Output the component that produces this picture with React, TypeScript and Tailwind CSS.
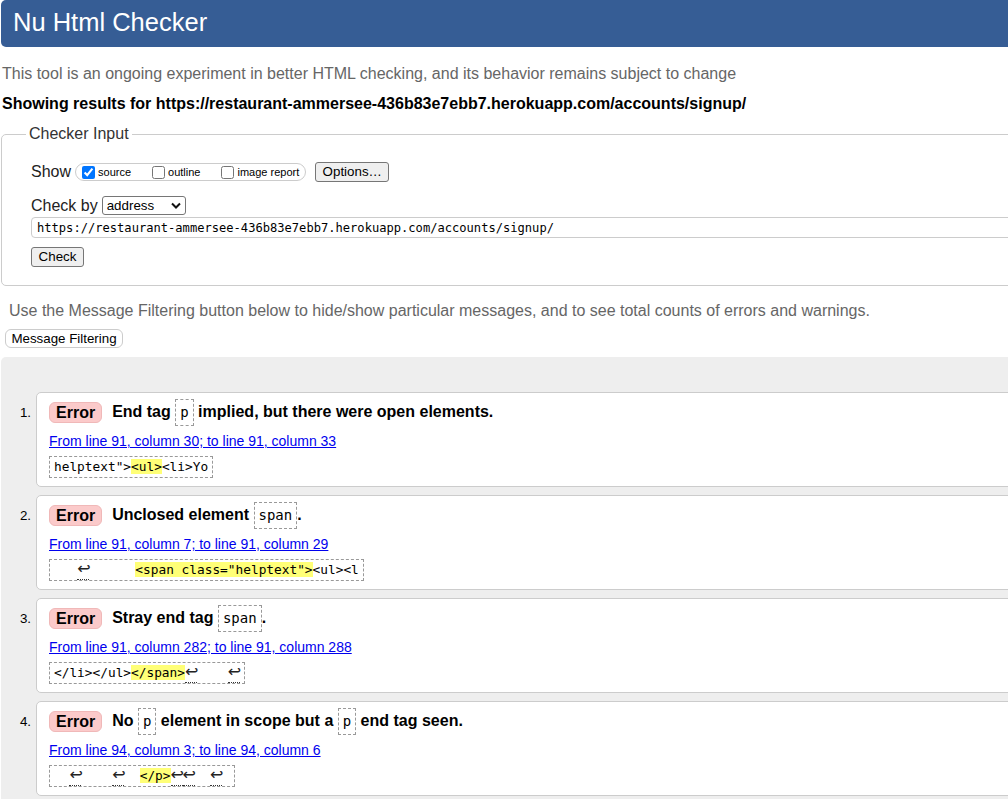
import React from 'react';

type Seg = { t: string; hl?: boolean } | { lf: true };

interface Message {
  title: (string | { code: string })[];
  link: string;
  extract: Seg[];
}

const LF: Seg = { lf: true };

const messages: Message[] = [
  {
    title: ['End tag ', { code: 'p' }, ' implied, but there were open elements.'],
    link: 'From line 91, column 30; to line 91, column 33',
    extract: [{ t: 'helptext">' }, { t: '<ul>', hl: true }, { t: '<li>Yo' }],
  },
  {
    title: ['Unclosed element ', { code: 'span' }, '.'],
    link: 'From line 91, column 7; to line 91, column 29',
    extract: [{ t: '   ' }, LF, { t: '      ' }, { t: '<span class="helptext">', hl: true }, { t: '<ul><l' }],
  },
  {
    title: ['Stray end tag ', { code: 'span' }, '.'],
    link: 'From line 91, column 282; to line 91, column 288',
    extract: [{ t: '</li></ul>' }, { t: '</span>', hl: true }, LF, { t: '    ' }, LF],
  },
  {
    title: ['No ', { code: 'p' }, ' element in scope but a ', { code: 'p' }, ' end tag seen.'],
    link: 'From line 94, column 3; to line 94, column 6',
    extract: [
      { t: '  ' }, LF, { t: '    ' }, LF, { t: '  ' }, { t: '</p>', hl: true }, LF, LF, { t: '  ' }, LF, { t: ' ' },
    ],
  },
];

const Extract: React.FC<{ segs: Seg[] }> = ({ segs }) => (
  <div className="inline-block h-[22px] border border-dashed border-[#999] px-[4px] font-['DejaVu_Sans_Mono',monospace] text-[12.8px] leading-[20px] whitespace-pre text-black">
    {segs.map((s, i) =>
      'lf' in s ? (
        <span
          key={i}
          className="inline-block w-[12px] h-[20px] align-top text-center border-b border-dotted border-[#333] font-['DejaVu_Sans',sans-serif] text-[16px] leading-[18px] text-[#222]"
        >
          ↩
        </span>
      ) : (
        <span key={i} className={s.hl ? 'bg-[#ffff77]' : ''}>
          {s.t}
        </span>
      )
    )}
  </div>
);

const Card: React.FC<{ n: number; m: Message }> = ({ n, m }) => (
  <li className="flex">
    <div className="w-[35px] shrink-0 pr-[5px] pt-[13px] text-right text-[13.33px] leading-[16px] text-black">{n}.</div>
    <div className="h-[95px] flex-1 rounded-[5px] border border-[#ccc] bg-white pl-[12px] pt-[6px]">
      <div className="flex h-[27px] items-center">
        <span className="inline-block h-[21px] rounded-[6px] border border-[#f0b8b8] bg-[#fbcaca] px-[6px] text-[16px] font-bold leading-[19px]">
          Error
        </span>
        <span className="ml-[10px] whitespace-pre text-[16px] font-bold leading-[18px]">
          {m.title.map((p, i) =>
            typeof p === 'string' ? (
              <span key={i}>{p}</span>
            ) : (
              <code
                key={i}
                className="inline-block align-middle border border-dashed border-[#999] px-[4px] py-[4px] font-['DejaVu_Sans_Mono',monospace] text-[14px] font-normal leading-[17px]"
              >
                {p.code}
              </code>
            )
          )}
        </span>
      </div>
      <div className="mt-[7px] h-[16px] text-[14px] leading-[16px]">
        <a href="#" className="text-[#0000ee] underline">
          {m.link}
        </a>
      </div>
      <div className="mt-[5px] h-[22px]">
        <Extract segs={m.extract} />
      </div>
    </div>
  </li>
);

const Checkbox: React.FC<{ label: string; checked?: boolean }> = ({ label, checked }) => (
  <label className="flex items-center">
    <input type="checkbox" defaultChecked={checked} className="ml-[4px] mr-[3px] h-[13px] w-[13px]" />
    <span className="text-[11px] leading-[13px]">{label}</span>
  </label>
);

export default function App() {
  return (
    <div className="h-[799px] w-[1008px] overflow-hidden bg-white font-['Liberation_Sans',Arial,sans-serif] text-black">
      <div className="w-[1060px]">
        <header className="ml-[1px] h-[47px] rounded-[5px] bg-[#365d95] pl-[12px] pt-[7px]">
          <h1 className="text-[25.5px] leading-[30px] text-white">Nu Html Checker</h1>
        </header>

        <p className="ml-[2px] mt-[18px] text-[16px] leading-[18px] text-[#666]">
          This tool is an ongoing experiment in better HTML checking, and its behavior remains subject to change
        </p>
        <p className="ml-[2px] mt-[12px] text-[16px] font-bold leading-[18px]">
          Showing results for https://restaurant-ammersee-436b83e7ebb7.herokuapp.com/accounts/signup/
        </p>

        <fieldset className="ml-[1px] mt-[12px] rounded-[5px] border border-[#ccc] pb-[18px] pl-[24px]">
          <legend className="px-[3px] text-[16px] leading-[18px] text-[#333]">Checker Input</legend>
          <div className="mt-[19px] pl-[5px]">
            <div className="flex h-[20px] items-center">
              <span className="text-[16px] leading-[18px] text-[#222]">Show</span>
              <div className="ml-[4px] flex h-[18px] items-center gap-[17px] rounded-[9px] border border-[#ccc] pl-[2px] pr-[6px]">
                <Checkbox label="source" checked />
                <Checkbox label="outline" />
                <Checkbox label="image report" />
              </div>
              <button className="ml-[9px] h-[20px] w-[74px] rounded-[3px] border border-[#767676] bg-[#efefef] text-[13.33px] leading-[18px]">
                Options…
              </button>
            </div>

            <div className="mt-[14px] flex h-[19px] items-center">
              <span className="text-[16px] leading-[18px] text-[#222]">Check by</span>
              <div className="ml-[4px] flex h-[19px] w-[84px] items-center justify-between rounded-[3px] border border-[#767676] bg-white pl-[4px] pr-[4px]">
                <span className="text-[13.33px] leading-[16px]">address</span>
                <svg width="10" height="7" viewBox="0 0 10 7" fill="none">
                  <path d="M1 1.5 L5 5.5 L9 1.5" stroke="#111" strokeWidth="2" />
                </svg>
              </div>
            </div>

            <div className="mt-[2px] flex h-[21px] items-center rounded-[4px] border border-[#ccc] pl-[5px] font-['DejaVu_Sans_Mono',monospace] text-[12.1px] leading-[16px]">
              https://restaurant-ammersee-436b83e7ebb7.herokuapp.com/accounts/signup/
            </div>

            <button className="mt-[9px] block h-[20px] w-[53px] rounded-[3px] border border-[#767676] bg-[#efefef] text-[13.33px] leading-[18px]">
              Check
            </button>
          </div>
        </fieldset>

        <p className="ml-[9px] mt-[16px] text-[16px] leading-[18px] text-[#666]">
          Use the Message Filtering button below to hide/show particular messages, and to see total counts of errors and warnings.
        </p>
        <button className="ml-[5px] mt-[9px] block h-[19px] w-[118px] rounded-[6px] border border-[#ccc] bg-white text-[13.33px] leading-[17px]">
          Message Filtering
        </button>

        <div className="ml-[1px] mt-[9px] h-[500px] rounded-tl-[5px] bg-[#eee] pt-[35px]">
          <ol className="flex flex-col gap-[8px]">
            {messages.map((m, i) => (
              <Card key={i} n={i + 1} m={m} />
            ))}
          </ol>
        </div>
      </div>
    </div>
  );
}
